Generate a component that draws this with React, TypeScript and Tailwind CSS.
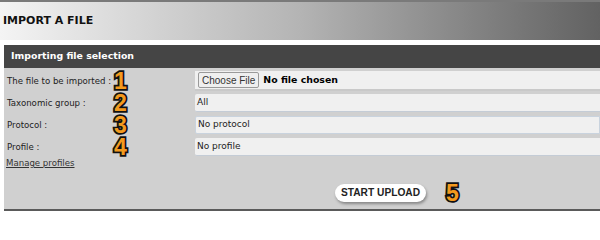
const digit =
  "font-['Liberation_Sans',Arial,sans-serif] font-bold text-[23px] leading-[20px] text-[#f39a1e] [-webkit-text-stroke:3.5px_#111] [paint-order:stroke_fill]";

function Field({ children, focused }: { children: React.ReactNode; focused?: boolean }) {
  return (
    <div
      className={
        "h-[18px] flex-1 flex items-center pl-[2px] rounded-l-[2px] bg-[#f0f0f0] text-[9px] text-[#222] border-b border-[#c4ccd6] " +
        (focused ? "border border-[#c9d3de]" : "")
      }
    >
      {children}
    </div>
  );
}

function Row({ label, n, children }: { label: string; n: string; children: React.ReactNode }) {
  return (
    <div className="flex items-center h-[22px]">
      <div className="w-[110px] pl-[3px] text-[8.6px] text-[#222] whitespace-nowrap">{label}</div>
      <div className={"w-[81px] " + digit}>{n}</div>
      {children}
    </div>
  );
}

export default function App() {
  return (
    <div className="w-[600px] h-[211px] bg-white overflow-hidden font-['DejaVu_Sans',Verdana,sans-serif]">
      <div className="h-[40px] border-t-2 border-[#7a7a7a] bg-gradient-to-r from-[#f4f4f4] via-[#b4b4b4] to-[#626262] flex items-center pl-[3px] pt-[1px]">
        <h1 className="text-[11px] font-bold text-[#111]">IMPORT A FILE</h1>
      </div>
      <div className="ml-[4px] mt-[5px]">
        <div className="h-[23px] bg-[#454545] flex items-center pl-[7px] text-[9.4px] font-bold text-white">
          Importing file selection
        </div>
        <div className="h-[143px] bg-[#d0d0d0] border-b-2 border-[#5a5a5a] pt-[2px] flex flex-col">
          <Row label="The file to be imported :" n="1">
            <div className="h-[20px] flex-1 flex items-center gap-[4px] bg-[#f0f0f0] pl-[3px] border-b-2 border-[#c9c9c9]">
              <span className="h-[16px] px-[3px] flex items-center border border-[#9a9a9a] rounded-[2px] bg-[#efefef] text-[10px] text-[#333] font-['Liberation_Sans',Arial,sans-serif]">
                Choose File
              </span>
              <span className="text-[9.4px] font-bold text-black">No file chosen</span>
            </div>
          </Row>
          <Row label="Taxonomic group :" n="2">
            <Field>All</Field>
          </Row>
          <Row label="Protocol :" n="3">
            <Field focused>No protocol</Field>
          </Row>
          <Row label="Profile :" n="4">
            <Field>No profile</Field>
          </Row>
          <a className="ml-[2px] mt-[1px] text-[8.6px] text-[#333] underline leading-none">Manage profiles</a>
          <div className="mt-auto mb-[6px] flex items-center pl-[331px] gap-[20px]">
            <button className="h-[18px] px-[6px] rounded-full bg-white text-[10.2px] font-bold text-[#222] shadow-[1px_2px_3px_rgba(0,0,0,0.35)] font-['Liberation_Sans',Arial,sans-serif]">
              START UPLOAD
            </button>
            <span className={digit}>5</span>
          </div>
        </div>
      </div>
    </div>
  );
}
